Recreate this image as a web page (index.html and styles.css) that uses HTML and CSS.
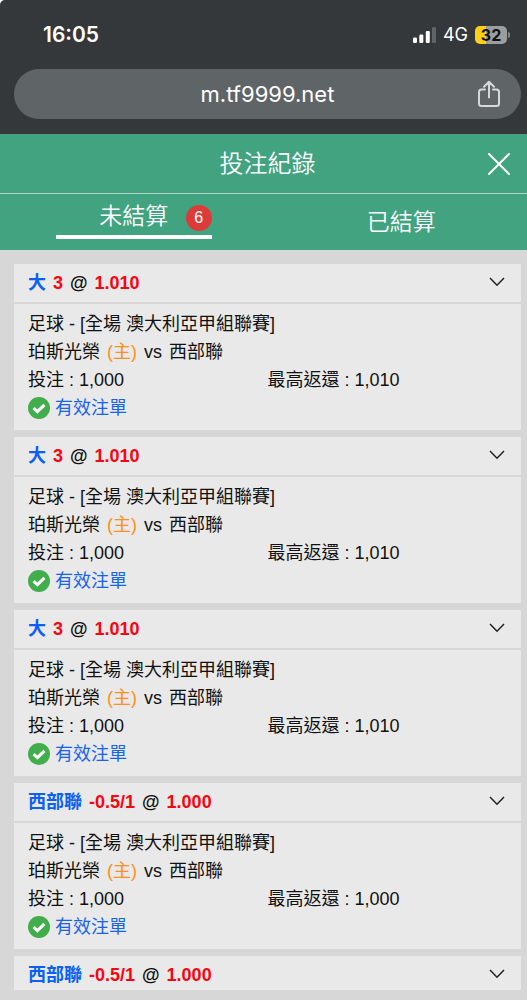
FILE: index.html
```html
<!DOCTYPE html>
<html lang="zh-Hant">
<head>
<meta charset="utf-8">
<meta name="viewport" content="width=device-width, initial-scale=1">
<title>投注紀錄</title>
<link rel="stylesheet" href="styles.css">
</head>
<body>
<svg class="defs" aria-hidden="true">
  <symbol id="chevron" viewBox="0 0 16 12"><path d="M1 1 L8 8.200 L15 1" fill="none" stroke="#222" stroke-width="1.5"/></symbol>
  <symbol id="check" viewBox="0 0 22 22"><circle cx="11" cy="11" r="11" fill="#42ad4b"/><path d="M5.6 11.2 L9.4 14.600 L16.4 7.800" fill="none" stroke="#fff" stroke-width="3"/></symbol>
</svg>
<div class="page">
  <div class="browser">
    <div class="status">
      <span class="time">16:05</span>
      <div class="indicators">
        <svg class="signal" viewBox="0 0 23 16" aria-hidden="true">
          <rect x="0" y="10.5" width="4" height="5.5" rx="1.2" fill="#fff"/>
          <rect x="6.3" y="7.5" width="4" height="8.5" rx="1.2" fill="#fff"/>
          <rect x="12.8" y="4" width="4" height="12" rx="1.2" fill="#fff"/>
          <rect x="19" y="0" width="4" height="16" rx="1.2" fill="#606467"/>
        </svg>
        <span class="network">4G</span>
        <div class="battery"><span class="level">32</span></div>
      </div>
    </div>
    <div class="address">
      <span class="url">m.tf9999.net</span>
      <button class="share" type="button" aria-label="分享">
        <svg viewBox="0 0 24 28" aria-hidden="true"><path d="M8 9.5 H4.5 Q2 9.5 2 12 V23.5 Q2 26 4.500 26 H19.500 Q22 26 22 23.500 V12 Q22 9.500 19.500 9.500 H16 M12 17.500 V2 M7 6.800 L12 1.800 L17 6.800" fill="none" stroke="#d6d8d9" stroke-width="2" stroke-linecap="round" stroke-linejoin="round"/></svg>
      </button>
    </div>
  </div>

  <header class="title-bar">
    <h1>投注紀錄</h1>
    <button class="close" type="button" aria-label="關閉">
      <svg viewBox="0 0 22 22" aria-hidden="true"><path d="M1 1 L21 21 M21 1 L1 21" stroke="#fff" stroke-width="2" stroke-linecap="round"/></svg>
    </button>
  </header>
  <nav class="tabs">
    <button class="tab active" type="button"><span class="tab-label">未結算<span class="badge">6</span></span></button>
    <button class="tab" type="button"><span class="tab-label">已結算</span></button>
  </nav>

  <main class="list">
    <article class="card">
      <button class="card-head" type="button"><span class="pick">大</span><span class="odds">3</span><span>@</span><span class="odds">1.010</span><svg class="chevron"><use href="#chevron"/></svg></button>
      <div class="card-body">
        <p>足球 - [全場 澳大利亞甲組聯賽]</p>
        <p class="teams"><span>珀斯光榮</span><span class="home">(主)</span><span>vs</span><span>西部聯</span></p>
        <p class="amounts"><span>投注 : 1,000</span><span>最高返還 : 1,010</span></p>
        <p class="valid"><svg class="check"><use href="#check"/></svg>有效注單</p>
      </div>
    </article>
    <article class="card">
      <button class="card-head" type="button"><span class="pick">大</span><span class="odds">3</span><span>@</span><span class="odds">1.010</span><svg class="chevron"><use href="#chevron"/></svg></button>
      <div class="card-body">
        <p>足球 - [全場 澳大利亞甲組聯賽]</p>
        <p class="teams"><span>珀斯光榮</span><span class="home">(主)</span><span>vs</span><span>西部聯</span></p>
        <p class="amounts"><span>投注 : 1,000</span><span>最高返還 : 1,010</span></p>
        <p class="valid"><svg class="check"><use href="#check"/></svg>有效注單</p>
      </div>
    </article>
    <article class="card">
      <button class="card-head" type="button"><span class="pick">大</span><span class="odds">3</span><span>@</span><span class="odds">1.010</span><svg class="chevron"><use href="#chevron"/></svg></button>
      <div class="card-body">
        <p>足球 - [全場 澳大利亞甲組聯賽]</p>
        <p class="teams"><span>珀斯光榮</span><span class="home">(主)</span><span>vs</span><span>西部聯</span></p>
        <p class="amounts"><span>投注 : 1,000</span><span>最高返還 : 1,010</span></p>
        <p class="valid"><svg class="check"><use href="#check"/></svg>有效注單</p>
      </div>
    </article>
    <article class="card">
      <button class="card-head" type="button"><span class="pick">西部聯</span><span class="odds">-0.5/1</span><span>@</span><span class="odds">1.000</span><svg class="chevron"><use href="#chevron"/></svg></button>
      <div class="card-body">
        <p>足球 - [全場 澳大利亞甲組聯賽]</p>
        <p class="teams"><span>珀斯光榮</span><span class="home">(主)</span><span>vs</span><span>西部聯</span></p>
        <p class="amounts"><span>投注 : 1,000</span><span>最高返還 : 1,000</span></p>
        <p class="valid"><svg class="check"><use href="#check"/></svg>有效注單</p>
      </div>
    </article>
    <article class="card">
      <button class="card-head" type="button"><span class="pick">西部聯</span><span class="odds">-0.5/1</span><span>@</span><span class="odds">1.000</span><svg class="chevron"><use href="#chevron"/></svg></button>
    </article>
  </main>
</div>
</body>
</html>
```

FILE: styles.css
```css
* { box-sizing: border-box; }

body {
  margin: 0;
  overflow: hidden;
  background: #fff;
  color: #111;
  font: 18px/28px "Liberation Sans", "Noto Sans CJK TC", sans-serif;
}

button {
  margin: 0;
  padding: 0;
  border: 0;
  background: none;
  color: inherit;
  font: inherit;
  cursor: pointer;
}

svg { display: block; }
h1, p { margin: 0; }

.defs { position: absolute; width: 0; height: 0; }

/* the sheet runs slightly past the right edge of the window */
.page {
  display: flex;
  flex-direction: column;
  width: calc(100% + 8px);
  height: 100vh;
  border-top-left-radius: 5px;
  overflow: hidden;
  background: #d7d7d7;
}

.browser {
  flex: none;
  padding: 0 14px 15px;
  background: #35383b;
  color: #fff;
  font-family: Inter, "Liberation Sans", sans-serif;
}

.status {
  display: flex;
  align-items: center;
  justify-content: space-between;
  height: 69px;
  padding: 0 14px 0 29px;
}

.time { font-size: 21px; font-weight: 600; }
.indicators { display: flex; align-items: center; gap: 7px; }
.signal { width: 23px; height: 16px; }
.network { font-size: 18px; }

.battery {
  position: relative;
  width: 32px;
  height: 18px;
  border-radius: 5px;
  background: linear-gradient(90deg, #fdd015 34%, #9b9d9e 34%);
  color: #111;
  font-size: 16px;
  font-weight: 700;
  line-height: 18px;
  text-align: center;
}

.battery::after {
  content: "";
  position: absolute;
  top: 6px;
  right: -3px;
  width: 2px;
  height: 6px;
  border-radius: 0 2px 2px 0;
  background: #85888a;
}

.address {
  display: grid;
  grid-template-columns: 1fr auto 1fr;
  align-items: center;
  height: 50px;
  padding: 0 20px;
  border-radius: 25px;
  background: #5f6467;
}

.url { grid-column: 2; font-size: 22px; }
.share { justify-self: end; }
.share svg { width: 24px; height: 28px; }

.title-bar {
  display: grid;
  grid-template-columns: 1fr auto 1fr;
  align-items: center;
  flex: none;
  height: 60px;
  padding: 0 25px;
  border-bottom: 1px solid #b4d3c7;
  background: #41a380;
  color: #fff;
}

.title-bar h1 { grid-column: 2; font-size: 24px; font-weight: 350; }
.close { justify-self: end; }
.close svg { width: 22px; height: 22px; }

.tabs {
  display: grid;
  grid-template-columns: 1fr 1fr;
  flex: none;
  height: 56px;
  background: #41a380;
  color: #fff;
  font-size: 23px;
  font-weight: 350;
}

.tab { display: flex; align-items: center; justify-content: center; }
.tab-label { position: relative; width: 156px; }
.active { align-items: flex-start; padding-top: 8px; }
.active .tab-label { padding-bottom: 5px; border-bottom: 4px solid #fff; }

.badge {
  position: absolute;
  top: 3px;
  right: 0;
  width: 26px;
  height: 26px;
  border-radius: 50%;
  background: #dc3b39;
  font-size: 16px;
  line-height: 26px;
}

.list {
  flex: 1;
  min-height: 0;
  margin-bottom: 10px;
  padding: 14px 14px 0;
  overflow-y: auto;
  scrollbar-width: none;
}

.card { margin-bottom: 7px; background: #e9e9e9; }

.card-head {
  display: flex;
  align-items: center;
  gap: 7px;
  width: 100%;
  height: 40px;
  padding: 0 16px 0 14px;
  border-bottom: 2px solid #d7d7d7;
  font-weight: 700;
}

.pick { color: #0a60f5; }
.odds { color: #fb0310; }
.chevron { width: 16px; height: 12px; margin-left: auto; }

.card-body { padding: 6px 14px 8px; }
.teams { display: flex; gap: 7px; }
.home { color: #fd8f1b; }
.amounts { display: grid; grid-template-columns: 1fr 1fr; }
.valid { display: flex; align-items: center; gap: 5px; color: #1763ee; }
.check { width: 22px; height: 22px; }
```
